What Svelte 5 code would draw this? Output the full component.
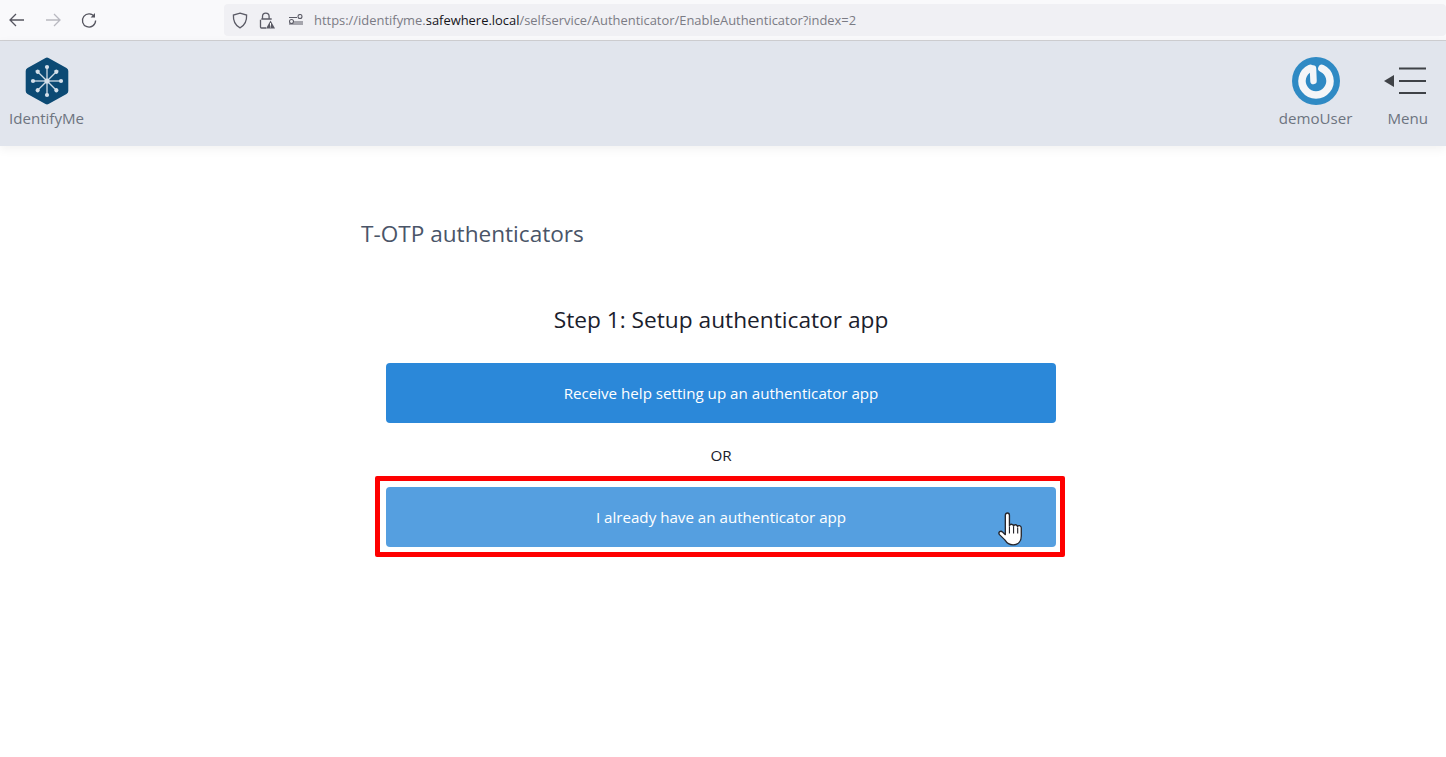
<script lang="ts">
	const spokes = [0, 45, 90, 135, 180, 225, 270, 315];
</script>

<div class="browser">
	<div class="nav-icons">
		<svg width="18" height="18" viewBox="0 0 18 18" fill="none" stroke="#55555f" stroke-width="1.3"><path d="M16 9H2M8 3L2 9l6 6" /></svg>
		<svg width="18" height="18" viewBox="0 0 18 18" fill="none" stroke="#b9b9c0" stroke-width="1.3"><path d="M2 9h14M10 3l6 6-6 6" /></svg>
		<svg width="18" height="18" viewBox="0 0 18 18" fill="none" stroke="#55555f" stroke-width="1.3"><path d="M14.6 6A6.6 6.6 0 1 0 15.6 9.5" /><path d="M15 2v4.4h-4.4" fill="#55555f" stroke="none" /></svg>
	</div>
	<div class="urlbar">
		<svg class="shield" width="16" height="17" viewBox="0 0 16 17" fill="none" stroke="#5b5b66" stroke-width="1.3"><path d="M8 1.2 14.600 3c.3 5.800-1.600 10.300-6.600 12.800C3 13.300 1.100 8.800 1.400 3z" /></svg>
		<svg class="lock" width="16" height="17" viewBox="0 0 16 17" fill="none"><path d="M3.500 7V4.500a3.300 3.300 0 0 1 6.600 0V7M2.300 7h10.400M1.500 7.800V15q0 1 1 1h4.500" stroke="#5b5b66" stroke-width="1.300" /><path d="M11.500 8.500 16 16.500H7z" fill="#5b5b66" /><path d="M11.500 11v2.800M11.500 14.500v.9" stroke="#fff" stroke-width="1" /></svg>
		<svg class="perm" width="15" height="12" viewBox="0 0 15 12" fill="none" stroke="#5b5b66" stroke-width="1.100"><path d="M0 3.500h8M0 10h14M5 8h9" /><circle cx="11" cy="2.500" r="2" /><circle cx="2.500" cy="7.500" r="2" /></svg>
		<span class="url">https://identifyme.<b>safewhere.local</b>/selfservice/Authenticator/EnableAuthenticator?index=2</span>
	</div>
</div>

<header class="topbar">
	<div class="brand">
		<svg width="46" height="49" viewBox="0 0 46 49">
			<path d="M23 .5a3 3 0 0 1 1.500.4L42.500 11a3.500 3.500 0 0 1 1.800 3v20a3.500 3.500 0 0 1-1.800 3L24.500 47.100a3 3 0 0 1-3 0L3.500 37a3.500 3.500 0 0 1-1.800-3V14a3.500 3.500 0 0 1 1.800-3L21.500 .9a3 3 0 0 1 1.500-.4z" fill="#0c4a74" />
			{#each spokes as a}
				<g transform="rotate({a} 23 24)">
					<path d="M23 24V{a % 90 === 0 ? 10 : 10.800}" stroke="#cfdbe6" stroke-width="1.300" />
					<circle cx="23" cy={a % 90 === 0 ? 10 : 10.800} r="2.100" fill="#d5e0ea" />
				</g>
			{/each}
			<circle cx="23" cy="24" r="2.600" fill="#d5e0ea" />
		</svg>
		<span>IdentifyMe</span>
	</div>
	<div class="right">
		<div class="item user">
			<svg width="48" height="48" viewBox="0 0 48 48" fill="none">
				<circle cx="24" cy="24" r="24" fill="#2f8ac4" />
				<path d="M29.900 11.300A14 14 0 1 1 18.100 11.300" stroke="#f4f6f8" stroke-width="7.500" stroke-linecap="round" />
				<path d="M21 11.500 21.500 24" stroke="#f4f6f8" stroke-width="6.500" stroke-linecap="round" />
			</svg>
			<span>demoUser</span>
		</div>
		<div class="item menu">
			<svg width="44" height="30" viewBox="0 0 44 30" fill="none">
				<path d="M0 15 10 9v12z" fill="#3f4247" />
				<path d="M15 2.500h27M15 15h27M15 27h27" stroke="#3f4247" stroke-width="2" />
			</svg>
			<span>Menu</span>
		</div>
	</div>
</header>

<main>
	<h1>T-OTP authenticators</h1>
	<h2>Step 1: Setup authenticator app</h2>
	<div class="actions">
		<button class="btn">Receive help setting up an authenticator app</button>
		<p class="or">OR</p>
		<div class="highlight">
			<button class="btn hover">I already have an authenticator app</button>
			<svg class="cursor" width="27" height="35" viewBox="0 0 26 34">
				<path d="M7 3.200c0-3 4-3 4 0v10.300c.2-2.200 3.700-2.200 4 .2.400-1.900 3.600-1.700 3.900.5.500-1.500 3.400-1.200 3.600 1.100v8c0 5-3 8.600-8 8.600-4.400 0-6-1.600-8-4.800L1.300 22c-1.700-2.500 1.300-4.400 3-2.500L7 22z" fill="#fff" stroke="#26262c" stroke-width="1.300" stroke-linejoin="round" />
				<path d="M11 14v7M15 14v7M19 15v6" stroke="#26262c" stroke-width="1.100" />
			</svg>
		</div>
	</div>
</main>

<style>
	:global(body) {
		background: #fff;
		font-family: "Open Sans", "Noto Sans", sans-serif;
		overflow: hidden;
	}

	.browser {
		height: 40px;
		background: #f9f9fb;
		border-bottom: 1px solid #cfcfd2;
		display: flex;
		align-items: center;
	}

	.nav-icons {
		display: flex;
		gap: 18px;
		padding-left: 8px;
		width: 216px;
	}

	.urlbar {
		width: 1222px;
		height: 32px;
		background: #f0f0f4;
		border-radius: 4px;
		display: flex;
		align-items: center;
		padding-left: 8px;
		box-sizing: border-box;
	}

	.shield {
		margin-right: 11px;
	}

	.lock {
		margin-right: 14px;
	}

	.perm {
		margin-right: 10px;
	}

	.url {
		font-size: 12.93px;
		color: #7b7b84;
		white-space: nowrap;
	}

	.url b {
		font-weight: 400;
		color: #15141a;
	}

	.topbar {
		height: 105px;
		background: #e1e5ed;
		box-shadow: 0 3px 10px rgba(0, 0, 0, 0.06);
		display: flex;
		justify-content: space-between;
		box-sizing: border-box;
		padding: 16px 18px 0 9px;
	}

	.brand,
	.item {
		display: flex;
		flex-direction: column;
		align-items: center;
		font-size: 15.1px;
		color: #6d7480;
	}

	.brand span {
		margin-top: 2px;
	}

	.right {
		display: flex;
		gap: 31px;
	}

	.item svg {
		height: 48px;
	}

	.item span {
		margin-top: 3px;
	}

	.menu span {
		margin-left: 4px;
	}

	main {
		width: 720px;
		margin-left: 361px;
	}

	h1 {
		margin: 70px 0 0;
		font-size: 22.6px;
		font-weight: 400;
		line-height: 36px;
		color: #4a5568;
	}

	h2 {
		margin: 50px 0 0;
		font-size: 22.7px;
		font-weight: 400;
		line-height: 36px;
		color: #1a202c;
		text-align: center;
	}

	.actions {
		margin-top: 25px;
		display: flex;
		flex-direction: column;
		align-items: center;
	}

	.btn {
		display: block;
		width: 670px;
		height: 60px;
		border: 0;
		border-radius: 4px;
		background: #2b88d9;
		color: #fff;
		font: inherit;
		font-size: 15.15px;
	}

	.btn.hover {
		background: #559fe0;
	}

	.or {
		margin: 0;
		height: 53px;
		line-height: 64px;
		font-size: 15.2px;
		color: #1a202c;
	}

	.highlight {
		position: relative;
		align-self: flex-start;
		margin-left: 14px;
		border: 5px solid #fe0000;
		border-radius: 2px;
		padding: 6px 4px 5px 6px;
	}

	.cursor {
		position: absolute;
		left: 618px;
		top: 31px;
	}
</style>
